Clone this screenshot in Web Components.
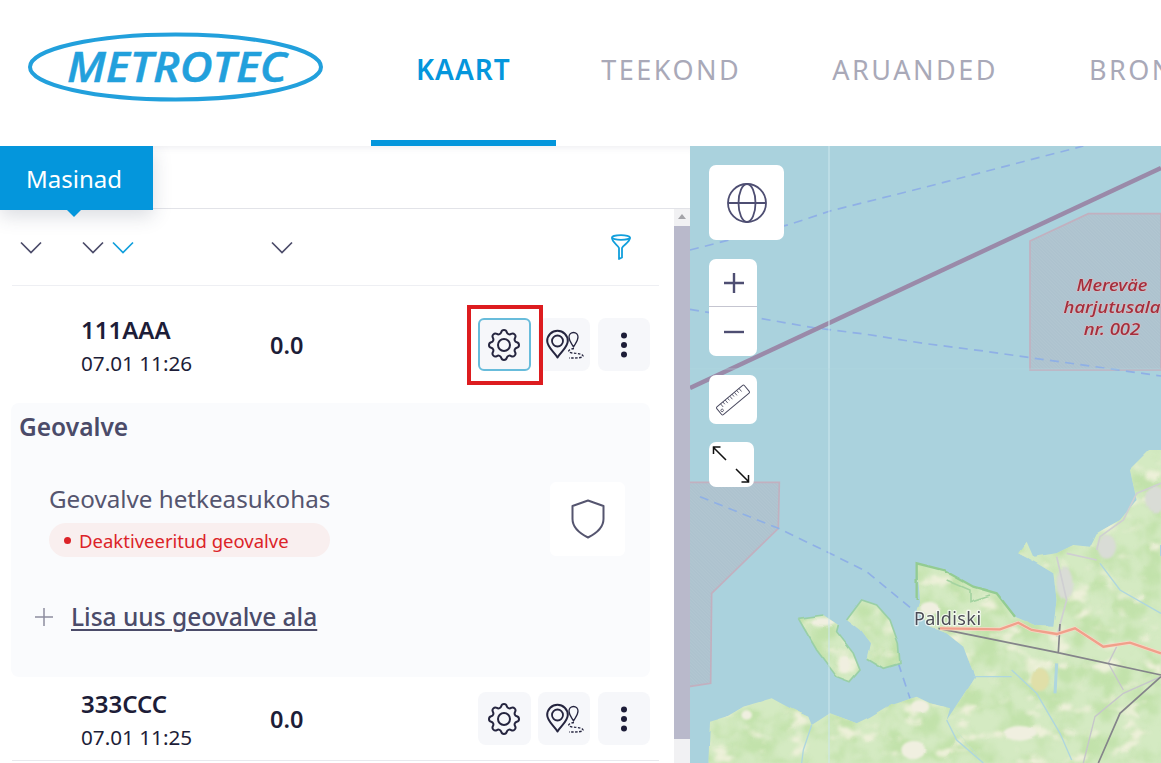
<!DOCTYPE html>
<html lang="et">
<head>
<meta charset="utf-8">
<title>Metrotec</title>
<style>
  html, body { margin: 0; height: 100%; overflow: hidden; background: #fff; }
  body { font-family: "Noto Sans", "Open Sans", sans-serif; color: #4b4b69; }
</style>
</head>
<body>
<app-shell>
  <app-header slot="top">
    <nav-tab active>KAART</nav-tab>
    <nav-tab>TEEKOND</nav-tab>
    <nav-tab>ARUANDED</nav-tab>
    <nav-tab>BRONEERINGUD</nav-tab>
  </app-header>
  <machine-panel slot="left">
    <machine-row name="111AAA" time="07.01 11:26" speed="0.0" pad="32" marked></machine-row>
    <geo-card></geo-card>
    <machine-row name="333CCC" time="07.01 11:25" speed="0.0" pad="15" line></machine-row>
  </machine-panel>
  <map-view slot="right"></map-view>
</app-shell>

<script>
const GEAR = `<svg width="40" height="40" viewBox="0 0 24 24" fill="none" stroke="#25253f" stroke-width="1.2" stroke-linejoin="round">
  <path d="M10.325 4.317c.426-1.756 2.924-1.756 3.35 0a1.724 1.724 0 0 0 2.573 1.066c1.543-.94 3.31.826 2.37 2.37a1.724 1.724 0 0 0 1.065 2.572c1.756.426 1.756 2.924 0 3.35a1.724 1.724 0 0 0-1.066 2.573c.94 1.543-.826 3.31-2.37 2.37a1.724 1.724 0 0 0-2.572 1.065c-.426 1.756-2.924 1.756-3.35 0a1.724 1.724 0 0 0-2.573-1.066c-1.543.94-3.31-.826-2.37-2.37a1.724 1.724 0 0 0-1.065-2.572c-1.756-.426-1.756-2.924 0-3.35a1.724 1.724 0 0 0 1.066-2.573c-.94-1.543.826-3.31 2.37-2.37c1 .608 2.296.07 2.572-1.065z"/>
  <circle cx="12" cy="12" r="3.6"/></svg>`

const ROUTE = `<svg width="38" height="32" viewBox="0 0 38 32" fill="none" stroke="#25253f" style="margin-left:2px">
  <path stroke-width="2" stroke-linejoin="round" d="M11.5 28.5C8 23 1.200 18 1.200 12a10.300 10.300 0 0 1 20.600 0c0 6-6.800 11-10.300 16.500z"/>
  <circle cx="11.500" cy="12" r="5.500" stroke-width="1.800"/>
  <path stroke-width="1.300" stroke-linejoin="round" d="M27.500 18C26 15 23 12 23 8a4.500 4.500 0 0 1 9 0c0 4-3 7-4.500 10z"/>
  <path stroke-width="1.400" stroke-dasharray="2.500 1.500" d="M28 19.500c-5 .5-8 3.500-2 4.500 6 .5 11 1 11 3s-6 2-14 2"/>
</svg>`

const DOTS = `<svg width="10" height="28" viewBox="0 0 10 28" fill="#1d1d38"><circle cx="5" cy="4.500" r="3"/><circle cx="5" cy="14" r="3"/><circle cx="5" cy="23.500" r="3"/></svg>`

const CHEVRON = color => `<svg width="22" height="13" viewBox="0 0 22 13" fill="none" stroke="${color}" stroke-width="1.700"><path d="M1 1.500l10 10 10-10"/></svg>`

class AppShell extends HTMLElement {
  constructor() {
    super()
    this.attachShadow({ mode: 'open' })
    this.shadowRoot.innerHTML = `
      <style>
        :host { display: grid; grid-template: 146px 617px / 690px 471px; width: 1161px; height: 763px; overflow: hidden; }
        .top { grid-column: 1 / 3; min-width: 0; overflow: hidden; }
      </style>
      <div class="top"><slot name="top"></slot></div>
      <slot name="left"></slot>
      <slot name="right"></slot>
    `
  }
}

class AppHeader extends HTMLElement {
  constructor() {
    super()
    this.attachShadow({ mode: 'open' })
    this.shadowRoot.innerHTML = `
      <style>
        :host { display: flex; height: 146px; background: #fff; overflow: hidden; }
        .logo { flex: none; width: 371px; padding: 32px 0 0 28px; box-sizing: border-box; }
        svg { display: block; }
        text { font-family: "Open Sans", "Noto Sans", sans-serif; font-style: italic; font-weight: 600; font-size: 41px; fill: #22a0dc; stroke: #22a0dc; stroke-width: .5px; }
        nav { display: flex; flex: none; }
      </style>
      <div class="logo">
        <svg width="295" height="70" viewBox="0 0 295 70">
          <ellipse cx="147.500" cy="35" rx="145.500" ry="32.500" fill="none" stroke="#22a0dc" stroke-width="4"/>
          <text x="39" y="50" textLength="220" lengthAdjust="spacingAndGlyphs">METROTEC</text>
        </svg>
      </div>
      <nav><slot></slot></nav>
    `
  }
}

class NavTab extends HTMLElement {
  constructor() {
    super()
    this.attachShadow({ mode: 'open' })
    this.shadowRoot.innerHTML = `
      <style>
        :host { display: flex; box-sizing: border-box; height: 146px; padding: 0 45.500px 2px; align-items: center; white-space: nowrap; font-size: 27px; letter-spacing: 2.500px; color: #a9a9b8; border-bottom: 6px solid transparent; flex: none; }
        :host([active]) { padding: 0 45px 2px; font-size: 28px; color: #0496dc; font-weight: 600; letter-spacing: 1px; border-bottom-color: #0496dc; }
      </style>
      <slot></slot>
    `
  }
}

class MachinePanel extends HTMLElement {
  constructor() {
    super()
    this.attachShadow({ mode: 'open' })
    this.shadowRoot.innerHTML = `
      <style>
        :host { display: flex; flex-direction: column; height: 617px; background: #fff; position: relative; overflow: hidden; box-shadow: inset 0 8px 8px -8px rgba(60,60,90,.12); }
        .bar { flex: none; height: 62px; border-bottom: 1px solid #e2e3e8; box-sizing: content-box; }
        .tab { position: relative; z-index: 2; display: flex; align-items: center; box-sizing: border-box; width: 153px; height: 64px; padding-left: 26px; background: #0496dc; color: #fff; font-size: 24px; box-shadow: 0 6px 18px rgba(50,60,90,.18); }
        .tab::after { content: ""; position: absolute; left: 67px; bottom: -7px; border: 7px solid transparent; border-bottom: 0; border-top-color: #0496dc; }
        .body { flex: 1; min-height: 0; display: grid; grid-template-columns: 674px 16px; }
        .list { min-width: 0; overflow: hidden; }
        .sort { display: flex; align-items: center; height: 76px; margin: 0 15px 0 12px; border-bottom: 1px solid #eeeff3; padding-left: 8px; }
        .sort svg { display: block; flex: none; }
        .sort .b { margin-left: 40px; }
        .sort .c { margin-left: 8px; }
        .sort .d { margin-left: 137px; }
        .sort .f { margin-left: 318px; }
        .track { background: #f1f1f3; position: relative; display: flex; flex-direction: column; align-items: center; }
        .arrow { margin-top: 5px; border: 4.500px solid transparent; border-top: 0; border-bottom: 5px solid #a3a3a8; }
        .thumb { margin-top: 7px; width: 100%; height: 513px; background: #b9b9cb; }
      </style>
      <div class="bar"><div class="tab">Masinad</div></div>
      <div class="body">
        <div class="list">
          <div class="sort">
            ${CHEVRON('#4b4b69')}
            <span class="b">${CHEVRON('#4b4b69')}</span>
            <span class="c">${CHEVRON('#119fdc')}</span>
            <span class="d">${CHEVRON('#4b4b69')}</span>
            <svg class="f" width="20" height="26" viewBox="0 0 20 26" fill="none" stroke="#119fdc" stroke-width="1.800" stroke-linejoin="round">
              <ellipse cx="10" cy="3.500" rx="9" ry="2.400"/>
              <path d="M1 3.500c0 5 6 7.500 7 10.500v11l3-1.500V14c1-3 8-5.500 8-10.500"/>
            </svg>
          </div>
          <slot></slot>
        </div>
        <div class="track"><div class="arrow"></div><div class="thumb"></div></div>
      </div>
    `
  }
}

class MachineRow extends HTMLElement {
  constructor() {
    super()
    this.attachShadow({ mode: 'open' })
    const pad = this.getAttribute('pad') || 15
    this.shadowRoot.innerHTML = `
      <style>
        :host { display: block; margin: 0 24px 0 12px; position: relative; }
        :host([line]) { border-bottom: 1px solid #e8e9ee; margin-right: 15px; }
        .row { display: grid; grid-template-columns: 69px 189px 1fr; grid-template-rows: 53px; align-items: center; padding: ${pad}px 0; }
        .id { grid-column: 2; color: #1d1d38; line-height: 1; }
        .name { font-size: 24px; font-weight: 600; line-height: 28px; margin-top: 4px; }
        .time { font-size: 20.700px; line-height: 28px; margin-top: 5px; }
        .speed { position: absolute; left: 258px; font-size: 23.500px; font-weight: 600; color: #1d1d38; }
        .btns { display: flex; gap: 7.250px; justify-content: flex-end; }
        .btn { display: flex; align-items: center; justify-content: center; box-sizing: border-box; width: 52.500px; height: 53px; background: #f6f7fa; border-radius: 8px; }
        :host([line]) .btns { margin-right: 9px; }
        :host([marked]) .gear { border: 2px solid #68bcdb; border-radius: 6px; }
        .mark { display: none; position: absolute; left: 455px; top: 19px; width: 68px; height: 72px; border: 4px solid #dd1c1f; }
        :host([marked]) .mark { display: block; }
      </style>
      <div class="row">
        <div class="id">
          <div class="name">${this.getAttribute('name')}</div>
          <div class="time">${this.getAttribute('time')}</div>
        </div>
        <div class="speed">${this.getAttribute('speed')}</div>
        <div class="btns">
          <div class="btn gear">${GEAR}</div>
          <div class="btn">${ROUTE}</div>
          <div class="btn">${DOTS}</div>
        </div>
      </div>
      <div class="mark"></div>
    `
  }
}

class GeoCard extends HTMLElement {
  constructor() {
    super()
    this.attachShadow({ mode: 'open' })
    this.shadowRoot.innerHTML = `
      <style>
        :host { display: block; box-sizing: border-box; height: 274px; margin: 0 24px 0 11px; padding: 8px 8px 0; background: #fafbfd; border-radius: 8px; color: #4b4b69; }
        h3 { margin: 0; font-size: 24.500px; font-weight: 600; line-height: 32px; }
        .zone { display: flex; justify-content: space-between; align-items: flex-start; margin-top: 39px; padding: 0 17px 0 30px; }
        .label { font-size: 24.200px; line-height: 34px; color: #55556f; }
        .badge { display: flex; align-items: center; box-sizing: border-box; width: 281px; height: 34px; margin-top: 7px; padding-left: 15px; background: #f9efef; border-radius: 17px; color: #dc2328; font-size: 18.500px; }
        .badge i { width: 7px; height: 7px; margin-right: 8px; background: #dc2328; border-radius: 50%; }
        .shield { display: flex; align-items: center; justify-content: center; width: 75px; height: 74px; background: #fff; border-radius: 6px; }
        .add { display: flex; align-items: center; margin: 43px 0 0 16px; }
        .add svg { display: block; margin-right: 18px; }
        a { color: #4b4b69; font-size: 24.500px; font-weight: 500; text-decoration: underline; text-underline-offset: 3px; text-decoration-thickness: 2px; white-space: nowrap; }
      </style>
      <h3>Geovalve</h3>
      <div class="zone">
        <div>
          <div class="label">Geovalve hetkeasukohas</div>
          <div class="badge"><i></i>Deaktiveeritud geovalve</div>
        </div>
        <div class="shield">
          <svg width="34" height="40" viewBox="0 0 34 40" fill="none" stroke="#55556f" stroke-width="2" stroke-linejoin="round"><path d="M17 1.500L32.500 7v13c0 9-9.500 15.500-15.500 18.500C11 35.500 1.500 29 1.500 20V7z"/></svg>
        </div>
      </div>
      <div class="add">
        <svg width="18" height="18" viewBox="0 0 18 18" stroke="#8d8d9f" stroke-width="1.500"><path d="M9 0v18M0 9h18"/></svg>
        <a href="#">Lisa uus geovalve ala</a>
      </div>
    `
  }
}

class MapControls extends HTMLElement {
  constructor() {
    super()
    this.attachShadow({ mode: 'open' })
    this.shadowRoot.innerHTML = `
      <style>
        :host { display: flex; flex-direction: column; align-items: flex-start; gap: 19px; position: absolute; left: 19px; top: 19px; z-index: 2; }
        .box { display: flex; align-items: center; justify-content: center; background: #fff; border-radius: 7px; }
        .globe { width: 75px; height: 75px; }
        .zoom { flex-direction: column; width: 48px; height: 97px; }
        .zoom div { width: 100%; box-sizing: border-box; padding-left: 2px; display: flex; align-items: center; justify-content: center; }
        .zoom div:first-child { height: 47px; }
        .zoom div + div { flex: 1; border-top: 1px solid #c5c5d0; }
        .ruler { width: 48px; height: 49px; }
        .full { width: 45px; height: 45px; margin-top: -1px; }
        svg { display: block; }
      </style>
      <div class="box globe">
        <svg width="40" height="40" viewBox="0 0 40 40" fill="none" stroke="#4e4e72" stroke-width="1.800">
          <circle cx="20" cy="20" r="19"/><ellipse cx="20" cy="20" rx="8.500" ry="19"/><path d="M1 20h38"/>
        </svg>
      </div>
      <div class="box zoom">
        <div><svg width="20" height="20" viewBox="0 0 20 20" stroke="#4e4e72" stroke-width="2.400"><path d="M10 0v20M0 10h20"/></svg></div>
        <div><svg width="20" height="4" viewBox="0 0 20 4" stroke="#4e4e72" stroke-width="2.400"><path d="M0 2h20"/></svg></div>
      </div>
      <div class="box ruler">
        <svg width="36" height="36" viewBox="0 0 36 36" fill="none" stroke="#4a4a60" stroke-width="1">
          <g transform="rotate(-40 18 18)">
            <rect x="0" y="13" width="36" height="10" rx="1.200"/>
            <path d="M6 13v4M9 13v3M12 13v4M15 13v3M18 13v4M21 13v3M24 13v4M27 13v3M30 13v4" stroke-width=".8"/>
            <circle cx="3" cy="19" r="1.300" stroke-width=".8"/>
          </g>
        </svg>
      </div>
      <div class="box full">
        <svg width="45" height="45" viewBox="0 0 45 45" fill="none" stroke="#111" stroke-width="1.500">
          <path d="M4 5l13 13M4.500 12V5h7M40 40L27 27M39.500 33v7h-7"/>
        </svg>
      </div>
    `
  }
}

class MapView extends HTMLElement {
  constructor() {
    super()
    this.attachShadow({ mode: 'open' })
    // map shapes use coordinates read off 3x crops, so the groups scale them back down
    this.shadowRoot.innerHTML = `
      <style>
        :host { display: block; position: relative; height: 617px; overflow: hidden; background: #aad2dd; }
        svg.map { display: block; position: absolute; left: 0; top: 0; }
        text { font-family: "Noto Sans", "Open Sans", sans-serif; paint-order: stroke; stroke-linejoin: round; }
      </style>
      <svg class="map" width="471" height="617" viewBox="0 0 471 617">
        <defs>
          <filter id="soft" x="-5%" y="-5%" width="110%" height="110%"><feGaussianBlur stdDeviation=".5"/></filter>
          <filter id="blot" x="-5%" y="-5%" width="110%" height="110%"><feGaussianBlur stdDeviation="3"/></filter>
          <filter id="rough" x="-5%" y="-5%" width="110%" height="110%">
            <feTurbulence type="fractalNoise" baseFrequency=".012" numOctaves="3" seed="7" result="n"/>
            <feDisplacementMap in="SourceGraphic" in2="n" scale="9" xChannelSelector="R" yChannelSelector="G"/>
          </filter>
          <filter id="forest" x="0" y="0" width="100%" height="100%" color-interpolation-filters="sRGB">
            <feTurbulence type="fractalNoise" baseFrequency=".014" numOctaves="4" seed="3"/>
            <feColorMatrix values="0 0 0 0 .76  0 0 0 0 .885  0 0 0 0 .67  4 0 0 0 -1.700"/>
            <feGaussianBlur stdDeviation="4"/>
          </filter>
          <filter id="clear" x="0" y="0" width="100%" height="100%" color-interpolation-filters="sRGB">
            <feTurbulence type="fractalNoise" baseFrequency=".014 .024" numOctaves="4" seed="11"/>
            <feColorMatrix values="0 0 0 0 .93  0 0 0 0 .94  0 0 0 0 .85  0 6 0 0 -3.500"/>
            <feGaussianBlur stdDeviation="4"/>
          </filter>
          <pattern id="hatch" width="7" height="7" patternUnits="userSpaceOnUse" patternTransform="rotate(-45)">
            <rect width="7" height="7" fill="#adc2ce"/><rect width="3" height="7" fill="#b2c6d1"/>
          </pattern>
          <clipPath id="landclip">
            <path d="M680 340L760 360L850 410L920 430L975 500L1040 528L1090 530L1100 450L1090 370L1040 340L985 310L1010 275L1030 320L1100 310L1150 285L1200 290L1220 250L1290 210L1340 150L1320 60L1380 0L1413 0L1413 939L880 939L850 900L790 830L770 810L830 720L855 680L820 590L770 550L720 530L680 480L690 450Z"/>
            <path d="M55 939L60 815L110 800L160 770L245 745L300 775L355 800L365 825L420 790L500 820L540 800L590 770L650 750L680 740L720 760L780 775L770 810L790 830L880 939Z"/>
            <path d="M325 505L400 495L445 525L440 545L490 610L510 660L480 695L440 680L380 600L345 540Z"/>
            <path d="M470 510L515 450L560 465L600 510L625 580L630 640L580 655L530 625L540 580L510 540Z"/>
          </clipPath>
        </defs>
        <g filter="url(#soft)">
          <!-- restricted sea areas -->
          <g transform="scale(.33333)">
            <path d="M1020 285L1195 203H1413V672H1020Z" fill="url(#hatch)" stroke="#c2b0bf" stroke-width="5"/>
          </g>
          <g transform="translate(0 304) scale(.33333)">
            <path d="M-5 97H268L265 235L65 430L62 700L-5 710Z" fill="url(#hatch)" stroke="#c2b0bf" stroke-width="5"/>
          </g>
          <!-- shipping lanes -->
          <g transform="scale(.33333)" fill="none" stroke="#8fb0e6" stroke-width="5" stroke-dasharray="27 19">
            <path d="M0 312L300 235L420 195L700 125L1180 0"/>
            <path d="M0 490L60 500M215 518L370 545L530 565L700 592L880 615L1020 635L1200 660L1413 690"/>
          </g>
          <g transform="translate(0 304) scale(.33333)" fill="none" stroke="#8fb0e6" stroke-width="5" stroke-dasharray="27 19">
            <path d="M30 140L265 235L410 305L530 365L670 480M625 640L660 745"/>
          </g>
          <path d="M0 242L471 22" stroke="#9a8aa9" stroke-width="4.600" fill="none"/>
          <!-- land -->
          <g transform="translate(0 304) scale(.33333)">
            <g filter="url(#rough)">
              <g clip-path="url(#landclip)">
                <rect width="1413" height="939" fill="#d4eac2"/>
                <rect width="1413" height="939" filter="url(#forest)"/>
                <rect width="1413" height="939" filter="url(#clear)"/>
                <g filter="url(#blot)">
                  <g fill="#f0efe0">
                    <ellipse cx="400" cy="515" rx="36" ry="12"/><ellipse cx="465" cy="645" rx="14" ry="24"/>
                    <ellipse cx="720" cy="475" rx="30" ry="20"/><ellipse cx="690" cy="770" rx="28" ry="20"/>
                    <ellipse cx="670" cy="900" rx="36" ry="28"/><ellipse cx="990" cy="850" rx="50" ry="22"/>
                    <ellipse cx="170" cy="795" rx="16" ry="14"/>
                  </g>
                  <g fill="#d9dcd6">
                    <ellipse cx="1125" cy="400" rx="26" ry="50"/><ellipse cx="1250" cy="290" rx="28" ry="36"/><ellipse cx="1395" cy="150" rx="30" ry="40"/>
                  </g>
                  <ellipse cx="1050" cy="690" rx="28" ry="36" fill="#e0dfa8"/>
                </g>
              </g>
              <path d="M680 450L680 340L760 360L850 410L920 430L975 500" fill="none" stroke="#93cc92" stroke-width="7"/>
              <path d="M770 390L840 420L840 455L900 435" fill="none" stroke="#a4d3a0" stroke-width="5"/>
              <path d="M325 505L400 495M445 525L440 545L490 610L510 660L480 695L440 680L380 600L345 540L325 505M470 510L515 450L560 465L600 510L625 580L630 640L580 655L530 625" fill="none" stroke="#99cfa6" stroke-width="5"/>
            </g>
            <!-- water on land -->
            <g fill="none" stroke="#aed6df" stroke-width="4">
              <path d="M965 660L1040 730L1110 850L1145 930M850 680L965 680M1230 340L1290 420L1413 490"/>
              <path d="M1100 640L1095 730" stroke-width="9"/>
              <path d="M770 810L800 870L880 939M365 825L340 900L335 939"/>
            </g>
            <!-- roads and rail -->
            <g fill="none">
              <path d="M1100 320L1130 450L1100 560M1130 310L1220 330M1413 100L1340 130L1300 210L1230 260L1220 300" stroke="#cfcfd2" stroke-width="5"/>
              <path d="M1180 939L1215 800L1300 730L1413 680M1280 590L1255 640L1300 720" stroke="#c6c6cb" stroke-width="4"/>
              <path d="M745 535L1100 607L1413 675M1105 607L1110 522M1413 680L1290 790L1225 939" stroke="#84848a" stroke-width="5"/>
              <path d="M750 535L930 538L985 518L1025 540L1100 552L1155 535L1240 590L1320 578L1413 610" stroke="#f9d6c6" stroke-width="11"/>
              <path d="M750 535L930 538L985 518L1025 540L1100 552L1155 535L1240 590L1320 578L1413 610" stroke="#f0a08a" stroke-width="7"/>
            </g>
          </g>
          <!-- tile seams -->
          <path d="M139 0V617" stroke="#cfe8ee" stroke-width="1"/>
          <path d="M0 223H471" stroke="#b2d8e2" stroke-width="1" opacity=".5"/>
          <g text-anchor="middle" font-style="italic" font-weight="500" font-size="16" fill="#a32f3c" stroke="#dcbcc2" stroke-width="1.200">
            <text transform="translate(422 145) scale(1.160 1)">Mereväe</text>
            <text transform="translate(422 167) scale(1.160 1)">harjutusala</text>
            <text transform="translate(422 189) scale(1.160 1)">nr. 002</text>
          </g>
          <text x="224" y="479" font-size="18" fill="#4c4c56" stroke="#fff" stroke-opacity=".7" stroke-width="2.500" letter-spacing=".4">Paldiski</text>
        </g>
      </svg>
      <map-controls></map-controls>
    `
  }
}

customElements.define('app-shell', AppShell)
customElements.define('app-header', AppHeader)
customElements.define('nav-tab', NavTab)
customElements.define('machine-panel', MachinePanel)
customElements.define('machine-row', MachineRow)
customElements.define('geo-card', GeoCard)
customElements.define('map-controls', MapControls)
customElements.define('map-view', MapView)
</script>
</body>
</html>
